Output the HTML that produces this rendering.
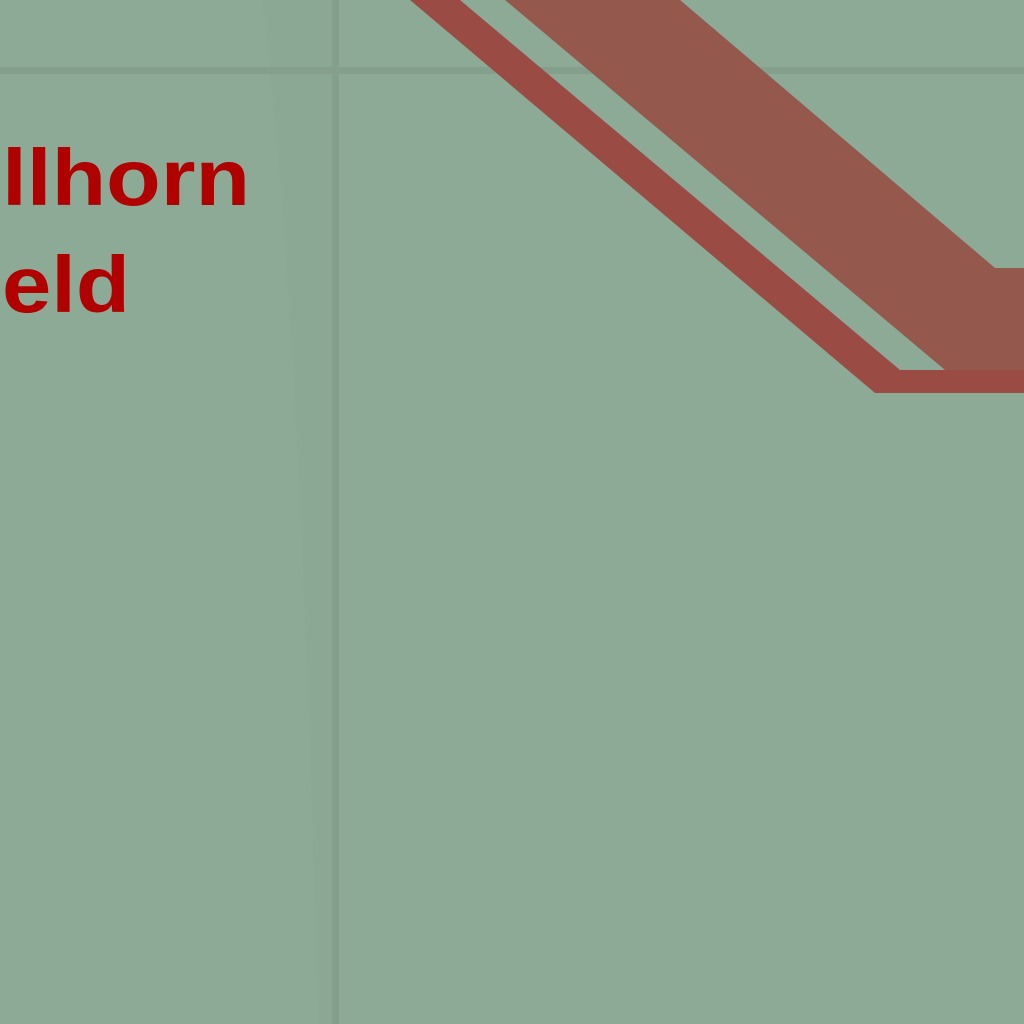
<!DOCTYPE html>
<html><head><style>
html,body{margin:0;padding:0;width:1024px;height:1024px;overflow:hidden;background:#8daa96}
</style></head><body>
<svg width="1024" height="1024" viewBox="0 0 1024 1024" xmlns="http://www.w3.org/2000/svg" style="position:absolute;left:0;top:0">
<rect width="1024" height="1024" fill="#8daa96"/>
<path d="M262,0 Q300,300 318,1024 L338,1024 L338,0 Z" fill="#8aa793" opacity="0.8"/>
<rect x="0" y="67" width="1024" height="7" fill="#84a08d"/>
<rect x="332" y="0" width="7" height="1024" fill="#84a08d"/>
<polygon points="410,0 460,0 900,370 1024,370 1024,393 875,393" fill="#9a4c44"/>
<polygon points="505,0 680,0 995,268 1024,268 1024,370 945,370" fill="#94584c"/>
<text x="2" y="205" font-family="Liberation Sans, sans-serif" font-weight="bold" font-size="80" fill="#b00000" textLength="248" lengthAdjust="spacingAndGlyphs">llhorn</text>
<text x="2" y="312" font-family="Liberation Sans, sans-serif" font-weight="bold" font-size="80" fill="#b00000" textLength="128" lengthAdjust="spacingAndGlyphs">eld</text>
</svg>
</body></html>
